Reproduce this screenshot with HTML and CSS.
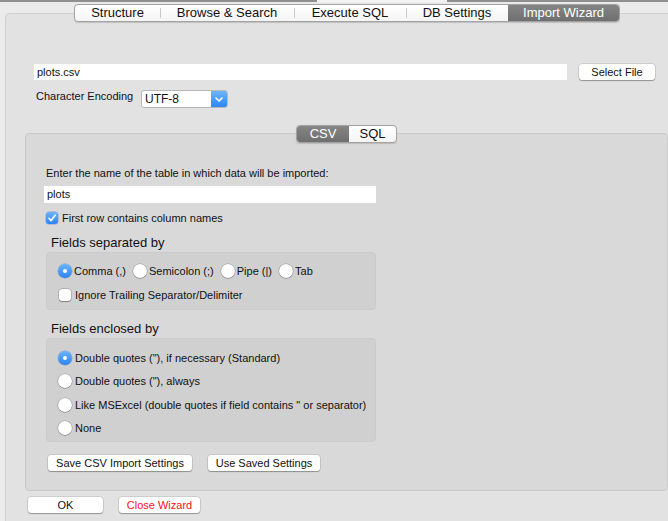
FILE: index.html
```html
<!DOCTYPE html>
<html>
<head>
<meta charset="utf-8">
<link rel="stylesheet" href="styles.css">
</head>
<body>
<div class="topline"><span class="tl-a"></span><span class="tl-b"></span><span class="tl-c"></span></div>
<div class="seg main-seg">
  <div class="s s1">Structure</div>
  <div class="s s2">Browse &amp; Search</div>
  <div class="s s3">Execute SQL</div>
  <div class="s s4">DB Settings</div>
  <div class="s s5 on">Import Wizard</div>
</div>
<div class="tabview">
  <div class="file-row">
    <div class="field file-field">plots.csv</div>
    <div class="btn select-btn">Select File</div>
  </div>
  <div class="enc-row">
    <div class="enc-label">Character Encoding</div>
    <div class="select">
      <span class="sel-val">UTF-8</span>
      <span class="sel-arrow"><svg width="16" height="18" viewBox="0 0 16 18"><path d="M5 8 L8 11 L11 8" fill="none" stroke="#fff" stroke-width="1.6" stroke-linecap="round" stroke-linejoin="round"/></svg></span>
    </div>
  </div>
  <div class="panel">
    <div class="seg small-seg">
      <div class="s c1 on">CSV</div>
      <div class="s c2">SQL</div>
    </div>
    <div class="prompt">Enter the name of the table in which data will be imported:</div>
    <div class="field table-field">plots</div>
    <div class="check-row first-row">
      <span class="cb checked"><svg width="12" height="12" viewBox="0 0 12 12"><path d="M3 6.3 L5.1 8.6 L9.2 3.2" fill="none" stroke="#fff" stroke-width="1.7" stroke-linecap="round" stroke-linejoin="round"/></svg></span>
      <span>First row contains column names</span>
    </div>
    <div class="heading">Fields separated by</div>
    <div class="group g1">
      <div class="radio-line">
        <span class="rb on"></span><span class="rl">Comma (,)</span>
        <span class="rb"></span><span class="rl">Semicolon (;)</span>
        <span class="rb"></span><span class="rl">Pipe (|)</span>
        <span class="rb"></span><span class="rl">Tab</span>
      </div>
      <div class="check-row ignore-row">
        <span class="cb"></span>
        <span>Ignore Trailing Separator/Delimiter</span>
      </div>
    </div>
    <div class="heading h2">Fields enclosed by</div>
    <div class="group g2">
      <div class="radio-row"><span class="rb on"></span><span class="rl">Double quotes ("), if necessary (Standard)</span></div>
      <div class="radio-row"><span class="rb"></span><span class="rl">Double quotes ("), always</span></div>
      <div class="radio-row"><span class="rb"></span><span class="rl">Like MSExcel (double quotes if field contains " or separator)</span></div>
      <div class="radio-row"><span class="rb"></span><span class="rl">None</span></div>
    </div>
    <div class="btn-row">
      <div class="btn save-btn">Save CSV Import Settings</div>
      <div class="btn use-btn">Use Saved Settings</div>
    </div>
  </div>
  <div class="bottom-row">
    <div class="btn ok-btn">OK</div>
    <div class="btn close-btn">Close Wizard</div>
  </div>
</div>
</body>
</html>
```

FILE: styles.css
```css
html, body {
  margin: 0;
  padding: 0;
}
body {
  width: 668px;
  height: 521px;
  overflow: hidden;
  background: #ebebeb;
  font-family: "Liberation Sans", Arial, sans-serif;
  font-size: 11px;
  color: #111;
}
.topline {
  display: flex;
  height: 2px;
}
.tl-a { width: 317px; background: #8f8f8f; }
.tl-b { width: 130px; background: #f2f2f2; }
.tl-c { flex: 1; background: #8f8f8f; }

.seg {
  position: relative;
  z-index: 2;
  display: flex;
  box-sizing: border-box;
  border: 1px solid #a3a3a3;
  border-radius: 4px;
  background: linear-gradient(#ffffff, #f4f4f4);
  box-shadow: 0 0.5px 1px rgba(0,0,0,0.15);
  overflow: hidden;
}
.seg .s {
  position: relative;
  text-align: center;
  box-sizing: border-box;
}
.seg .s + .s::before {
  content: "";
  position: absolute;
  left: 0;
  top: 3px;
  bottom: 3px;
  width: 1px;
  background: #c9c9c9;
}
.seg .s.on {
  background: linear-gradient(#858585, #6f6f6f);
  color: #fff;
}
.seg .s.on::before, .seg .s.on + .s::before { display: none; }

.main-seg {
  margin: 2px 0 0 74px;
  width: 546px;
  height: 18px;
  font-size: 13px;
  line-height: 16px;
}
.s1 { width: 85px; }
.s2 { width: 134px; }
.s3 { width: 112px; }
.s4 { width: 102px; }
.s5 { flex: 1; }

.tabview {
  margin: -9px 0 0 5px;
  box-sizing: border-box;
  height: 530px;
  border: 1px solid #cfcfcf;
  border-right: none;
  border-radius: 5px 0 0 0;
  background: #e2e2e2;
  padding-top: 50px;
}

.field {
  box-sizing: border-box;
  background: #fff;
  padding-left: 3px;
  line-height: 16px;
  height: 16px;
}
.file-row {
  display: flex;
  align-items: flex-start;
  padding-left: 28px;
}
.file-field { width: 533px; }

.btn {
  box-sizing: border-box;
  background: #fff;
  border-radius: 3px;
  box-shadow: 0 0 0 0.5px rgba(0,0,0,0.18), 0 1px 1px rgba(0,0,0,0.28);
  text-align: center;
  line-height: 16px;
  height: 16px;
  color: #111;
}
.select-btn {
  margin-left: 12px;
  width: 76px;
}

.enc-row {
  display: flex;
  align-items: flex-start;
  margin-top: 10px;
  padding-left: 30px;
}
.enc-label {
  width: 105px;
  line-height: 13px;
}
.select {
  display: flex;
  box-sizing: border-box;
  width: 87px;
  height: 18px;
  border: 1px solid #b8b8b8;
  border-radius: 3px;
  background: #fff;
  overflow: hidden;
}
.sel-val {
  flex: 1;
  font-size: 12px;
  line-height: 17px;
  padding-left: 3px;
}
.sel-arrow {
  width: 16px;
  height: 16px;
  display: flex;
  background: linear-gradient(#6db6fb, #2f86f4);
}
.sel-arrow svg { display: block; margin-top: -1px; }

.panel {
  box-sizing: border-box;
  margin: 25px 0 0 19px;
  width: 643px;
  height: 358px;
  border: 1px solid #c9c9c9;
  border-radius: 4px;
  background: #d9d9d9;
}
.small-seg {
  margin: -9px 0 0 270px;
  width: 101px;
  height: 18px;
  font-size: 13px;
  line-height: 16px;
}
.c1 { width: 52px; }
.c2 { flex: 1; }

.prompt {
  margin: 23px 0 0 20px;
  line-height: 14px;
}
.table-field {
  margin: 6px 0 0 18px;
  width: 332px;
  height: 17px;
  line-height: 17px;
}

.check-row {
  display: flex;
  align-items: center;
  line-height: 14px;
}
.first-row {
  margin: 8px 0 0 20px;
}
.cb {
  box-sizing: border-box;
  width: 12px;
  height: 12px;
  border-radius: 3px;
  background: #fff;
  box-shadow: 0 0 0 0.5px rgba(0,0,0,0.25), 0 0.5px 1px rgba(0,0,0,0.3);
  margin-right: 4px;
  display: inline-flex;
}
.cb.checked {
  background: linear-gradient(#6ab4fb, #2c83f3);
  box-shadow: 0 0 0 0.5px rgba(0,60,160,0.35);
}

.heading {
  margin: 10px 0 0 25px;
  font-size: 13px;
  line-height: 16px;
}
.heading.h2 { margin-top: 11px; }

.group {
  box-sizing: border-box;
  margin: 1px 0 0 20px;
  width: 330px;
  border: 1px solid #cbcbcb;
  border-radius: 4px;
  background: #d0d0d0;
  padding-left: 11px;
}
.g1 {
  height: 58px;
  padding-top: 11px;
}
.radio-line {
  display: flex;
  align-items: center;
  line-height: 14px;
}
.rb {
  box-sizing: border-box;
  width: 14px;
  height: 14px;
  border-radius: 50%;
  background: #fff;
  box-shadow: 0 0 0 0.5px rgba(0,0,0,0.25), 0 0.5px 1px rgba(0,0,0,0.3);
  margin-right: 2px;
  flex: none;
  position: relative;
}
.rb.on {
  background: linear-gradient(#6ab4fb, #2c83f3);
  box-shadow: 0 0 0 0.5px rgba(0,60,160,0.35);
}
.rb.on::after {
  content: "";
  position: absolute;
  left: 5px;
  top: 5px;
  width: 4px;
  height: 4px;
  border-radius: 50%;
  background: #fff;
}
.radio-line .rl { margin-right: 7px; }
.ignore-row {
  margin: 10px 0 0 1px;
}

.g2 {
  height: 104px;
  padding-top: 12px;
  display: flex;
  flex-direction: column;
  gap: 9.3px;
}
.radio-row {
  display: flex;
  align-items: center;
  line-height: 14px;
}
.radio-row .rl { margin-left: 1px; }

.btn-row {
  display: flex;
  margin: 13px 0 0 22px;
}
.save-btn { width: 144px; height: 16px; }
.use-btn { width: 112px; margin-left: 16px; }

.bottom-row {
  display: flex;
  margin: 6px 0 0 22px;
}
.ok-btn { width: 75px; }
.close-btn { width: 81px; margin-left: 16px; color: #ff1020; }
```
